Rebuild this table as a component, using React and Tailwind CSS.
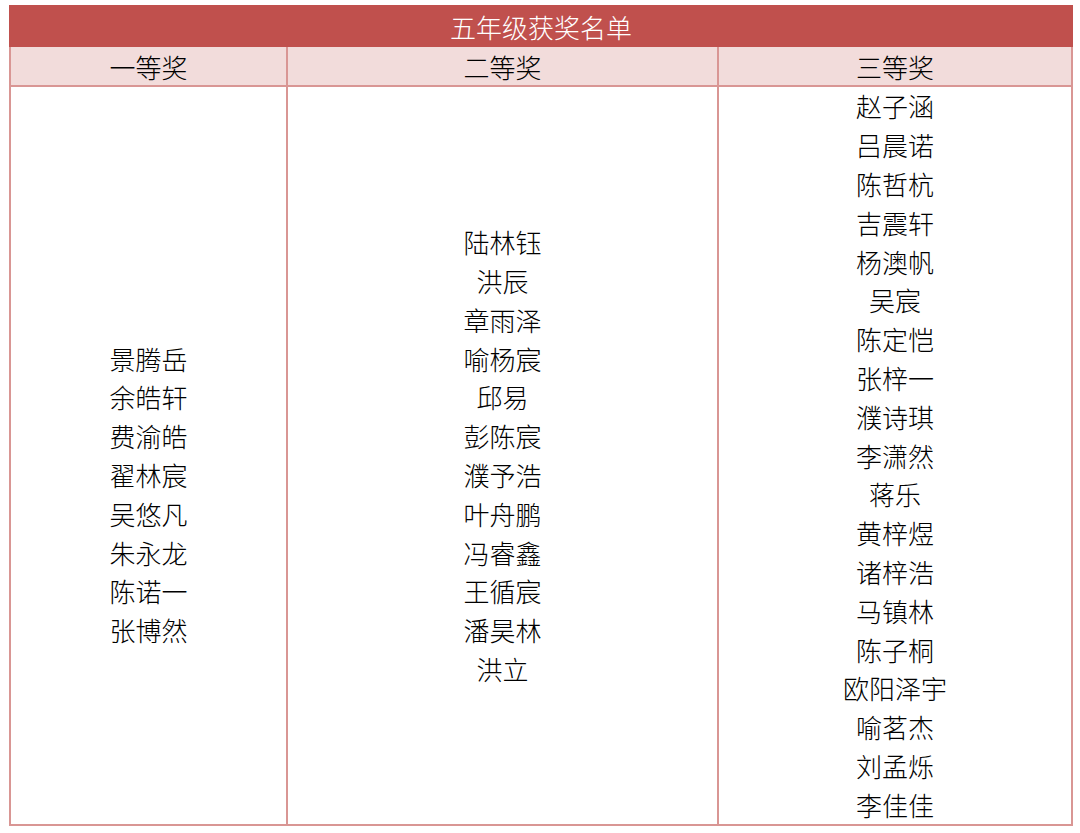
import React from "react";

const first = ["景腾岳", "余皓轩", "费渝皓", "翟林宸", "吴悠凡", "朱永龙", "陈诺一", "张博然"];
const second = ["陆林钰", "洪辰", "章雨泽", "喻杨宸", "邱易", "彭陈宸", "濮予浩", "叶舟鹏", "冯睿鑫", "王循宸", "潘昊林", "洪立"];
const third = ["赵子涵", "吕晨诺", "陈哲杭", "吉震轩", "杨澳帆", "吴宸", "陈定恺", "张梓一", "濮诗琪", "李潇然", "蒋乐", "黄梓煜", "诸梓浩", "马镇林", "陈子桐", "欧阳泽宇", "喻茗杰", "刘孟烁", "李佳佳"];

function Col({ names, offset }) {
  return (
    <div className="h-[739px] pt-[1px] border-r-2 border-b-2 border-[#d99694] flex flex-col items-center justify-center leading-[38.8px] text-[26px] font-light text-black">
      {offset ? <div className="h-[77.6px]" /> : null}
      {names.map((n) => (
        <div key={n}>{n}</div>
      ))}
    </div>
  );
}

export default function App() {
  return (
    <div
      className="w-[1080px] h-[833px] bg-white pl-[9px] pt-[5px]"
      style={{ fontFamily: '"Noto Sans CJK SC", "Noto Sans", sans-serif' }}
    >
      <div className="w-[1064px]">
        <div className="h-[42px] bg-[#c0504d] text-white text-[26px] font-light flex items-center justify-center">
          五年级获奖名单
        </div>
        <div className="grid grid-cols-[277px_431px_354px] border-l-2 border-[#d99694]">
          {["一等奖", "二等奖", "三等奖"].map((h) => (
            <div
              key={h}
              className="h-[40px] bg-[#f2dcdb] border-r-2 border-b-2 border-[#d99694] flex items-center justify-center text-[26px] font-light text-black"
            >
              {h}
            </div>
          ))}
          <Col names={first} offset />
          <Col names={second} />
          <Col names={third} />
        </div>
      </div>
    </div>
  );
}
